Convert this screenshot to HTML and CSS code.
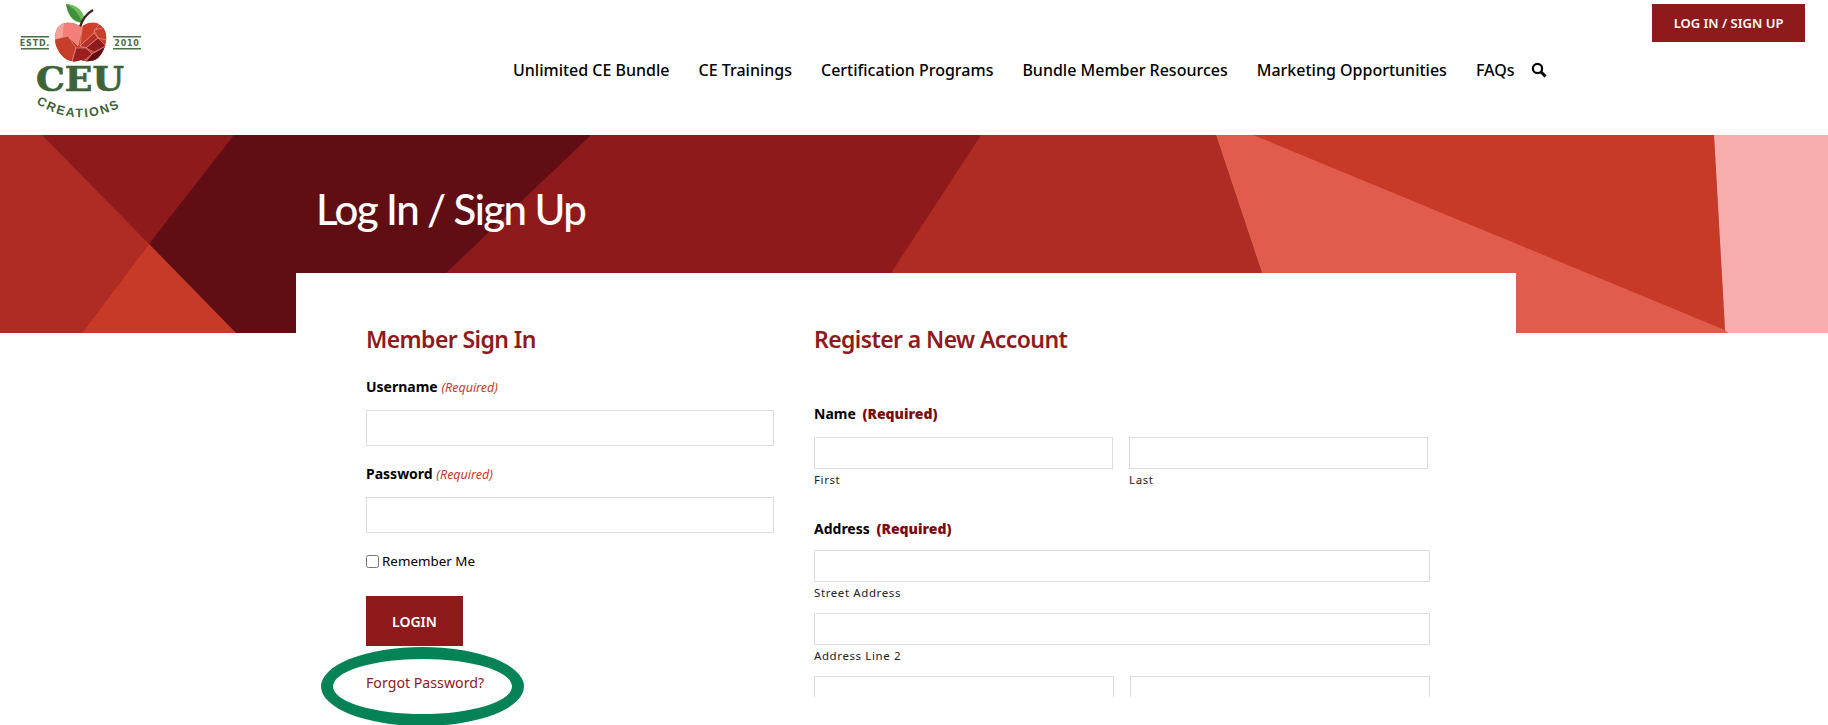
FILE: index.html
```html
<!DOCTYPE html>
<html lang="en">
<head>
  <meta charset="UTF-8">
  <title>Log In / Sign Up - CEU Creations</title>
  <link rel="stylesheet" href="styles.css">
</head>
<body>

  <header class="site-header">
    <a class="logo" href="#">
      <svg width="150" height="130" viewBox="0 0 150 130">
        <defs>
          <clipPath id="apple-shape">
            <path d="M81 27C73 21 61 21 57 29C52 40 57 53 66 59C71 62 76 62 81 60C86 62 93 62 98 58C105 51 109 38 104 29C99 21 89 21 81 27Z"/>
          </clipPath>
          <path id="arc" d="M36 103Q78 131 126 104"/>
        </defs>
        <path d="M82 22C76 24 68 18 66 4C74 4 85 10 84 21Z" fill="#6dbb5c"/>
        <path d="M82 22C79 14 74 8 66 4C68 16 74 22 82 22Z" fill="#3f8f3c"/>
        <path d="M80 27C82 20 86 14 93 10" fill="none" stroke="#43241f" stroke-width="2.5"/>
        <g clip-path="url(#apple-shape)" stroke="#f3b3aa" stroke-width=".5">
          <rect x="50" y="20" width="60" height="45" fill="#c63a27"/>
          <polygon points="50,20 64,20 62,44 50,46" fill="#f6a29c"/>
          <polygon points="64,20 83,24 78,46 68,36 62,38" fill="#f27f78"/>
          <polygon points="83,22 100,22 94,33 80,46" fill="#cc4029"/>
          <polygon points="52,40 68,36 76,48 72,62 60,60" fill="#c63e28"/>
          <polygon points="94,30 110,26 106,40 98,38" fill="#c6402b"/>
          <polygon points="80,46 94,33 98,38 86,48" fill="#b4302a"/>
          <polygon points="86,48 98,38 106,46 94,52" fill="#8e1a1b"/>
          <polygon points="76,48 86,48 92,54 80,64 72,62" fill="#9c1f1f"/>
          <polygon points="92,54 106,46 100,64 84,64" fill="#600e14"/>
        </g>
        <g class="logo-rules">
          <rect x="21" y="36" width="28" height="1.5"/>
          <rect x="21" y="48" width="28" height="1.5"/>
          <rect x="113" y="36" width="28" height="1.5"/>
          <rect x="113" y="48" width="28" height="1.5"/>
        </g>
        <text class="logo-small" x="35" y="46" text-anchor="middle">ESTD.</text>
        <text class="logo-small" x="127" y="46" text-anchor="middle">2010</text>
        <text class="logo-ceu" x="80" y="91" text-anchor="middle" textLength="88" lengthAdjust="spacingAndGlyphs">CEU</text>
        <text class="logo-creations"><textPath href="#arc">CREATIONS</textPath></text>
      </svg>
    </a>

    <nav class="main-nav">
      <a href="#">Unlimited CE Bundle</a>
      <a href="#">CE Trainings</a>
      <a href="#">Certification Programs</a>
      <a href="#">Bundle Member Resources</a>
      <a href="#">Marketing Opportunities</a>
      <a href="#">FAQs</a>
      <svg class="search-icon" viewBox="0 0 16 16" width="16" height="16">
        <circle cx="6.5" cy="6.5" r="4.6" fill="none" stroke="#000" stroke-width="2.2"/>
        <path d="M10 10l4.6 4.4" stroke="#000" stroke-width="3"/>
      </svg>
    </nav>

    <a class="account-btn" href="#">LOG IN / SIGN UP</a>
  </header>

  <section class="hero">
    <svg class="hero-art" viewBox="0 0 1828 198" width="1828" height="198" preserveAspectRatio="none">
      <rect width="1828" height="198" fill="#8e1a1b"/>
      <polygon points="0,0 42,0 149,109 82,198 0,198" fill="#ae2c23"/>
      <polygon points="234,0 591,0 383,198 236,198 149,109" fill="#600e14"/>
      <polygon points="149,109 236,198 82,198" fill="#c63a27"/>
      <polygon points="981,0 1216,0 1282,198 852,198" fill="#ae2c23"/>
      <polygon points="1216,0 1300,0 1740,198 1282,198" fill="#e15c4d"/>
      <polygon points="1253,0 1714,0 1725,195" fill="#c63a27"/>
      <polygon points="1714,0 1828,0 1828,198 1728,198 1725,195" fill="#f7adac"/>
    </svg>
    <h1>Log In / Sign Up</h1>
  </section>

  <main class="card">
    <section class="signin">
      <h2>Member Sign In</h2>
      <div class="field">
        <label>Username <em>(Required)</em></label>
        <input type="text">
      </div>
      <div class="field">
        <label>Password <em>(Required)</em></label>
        <input type="password">
      </div>
      <label class="remember"><input type="checkbox"> Remember Me</label>
      <button class="login-btn">LOGIN</button>
      <div class="forgot">
        <a href="#">Forgot Password?</a>
        <span class="forgot-ring"></span>
      </div>
    </section>

    <section class="register">
      <h2>Register a New Account</h2>
      <div class="reg-frame">
        <div class="reg-group name-group">
          <label>Name <b>(Required)</b></label>
          <div class="two-col">
            <div><input type="text"><small>First</small></div>
            <div><input type="text"><small>Last</small></div>
          </div>
        </div>
        <div class="reg-group">
          <label>Address <b>(Required)</b></label>
          <input type="text"><small>Street Address</small>
          <input class="line-two" type="text"><small>Address Line 2</small>
          <div class="two-col city-row">
            <div><input type="text"></div>
            <div><input type="text"></div>
          </div>
        </div>
      </div>
    </section>
  </main>

</body>
</html>
```

FILE: styles.css
```css
html, body { height: 100%; }
body {
  margin: 0;
  height: 725px;
  overflow: hidden;
  background: #fff;
  color: #000;
  font-family: "Noto Sans", sans-serif;
  font-size: 14px;
}
a { color: inherit; text-decoration: none; }

.site-header {
  display: flex;
  height: 135px;
}
.logo { display: block; width: 150px; height: 130px; }
.logo svg { display: block; }
.logo-rules rect { fill: #4a6d47; }
.logo-small {
  font: bold 8px "DejaVu Sans", sans-serif;
  letter-spacing: .8px;
  fill: #4a6d47;
}
.logo-ceu {
  font: bold 33px "DejaVu Serif", serif;
  fill: #3f6339;
  stroke: #3f6339;
  stroke-width: .7px;
}
.logo-creations {
  font: bold 12.5px "Liberation Sans", sans-serif;
  letter-spacing: 1.9px;
  fill: #3f6339;
}

.main-nav {
  display: flex;
  align-items: center;
  gap: 29px;
  height: 140px;
  margin-left: 363px;
  font-size: 16px;
  font-weight: 500;
  white-space: nowrap;
}
.search-icon { margin-left: -12px; }

.account-btn {
  margin: 4px 23px 0 auto;
  width: 153px;
  height: 38px;
  line-height: 38px;
  text-align: center;
  background: #8e1a1b;
  color: #fff;
  font-size: 13px;
  font-weight: 600;
}

.hero {
  display: grid;
  height: 198px;
}
.hero-art { grid-area: 1 / 1; display: block; }
.hero h1 {
  grid-area: 1 / 1;
  z-index: 1;
  margin: 49px 0 0 316px;
  color: #fff;
  font-family: Lato, sans-serif;
  font-size: 42px;
  font-weight: 500;
  letter-spacing: -1.6px;
  line-height: 50px;
}

.card {
  position: relative;
  z-index: 2;
  display: flex;
  width: 1150px;
  height: 452px;
  margin: -60px 0 0 296px;
  padding-left: 70px;
  background: #fff;
}
.card h2 {
  margin: 0;
  padding-top: 50px;
  color: #8e1a1b;
  font-size: 23px;
  font-weight: 600;
  letter-spacing: -.6px;
  line-height: 32px;
}
.card input[type=text], .card input[type=password] {
  display: block;
  box-sizing: border-box;
  width: 100%;
  padding: 0 8px;
  background: #fff;
  border: 1px solid #ddd;
  border-radius: 0;
}

.signin { width: 408px; margin-right: 40px; flex: none; }
.field { margin-top: 22px; }
.field + .field { margin-top: 18px; }
.field label {
  display: block;
  font-size: 14px;
  font-weight: 700;
  line-height: 20px;
  margin-bottom: 12px;
}
.field em {
  color: #c63a27;
  font-size: 12.5px;
  font-weight: 400;
}
.field input { height: 36px; }

.remember {
  display: flex;
  align-items: center;
  gap: 3px;
  margin-top: 18px;
  height: 20px;
  font-size: 13.4px;
}
.remember input { margin: 0; width: 13px; height: 13px; }

.login-btn {
  display: block;
  margin-top: 25px;
  width: 97px;
  height: 50px;
  padding: 0;
  border: 0;
  background: #8e1a1b;
  color: #fff;
  font: 600 14px "Noto Sans", sans-serif;
}

.forgot {
  position: relative;
  margin-top: 27px;
  font-size: 14.2px;
  line-height: 20px;
  color: #8e1a1b;
}
/* hand-drawn highlight in the screenshot */
.forgot-ring {
  position: absolute;
  left: -45px;
  top: -26px;
  box-sizing: border-box;
  width: 203px;
  height: 79px;
  border: 12px solid #058356;
  border-radius: 50%;
}

.register { width: 616px; flex: none; }
.reg-frame {
  height: 342px;
  overflow: hidden;
  padding-top: 49px;
  box-sizing: border-box;
}
.reg-group > label {
  display: block;
  font-size: 14px;
  font-weight: 700;
  line-height: 20px;
  margin-bottom: 11px;
}
.reg-group > label b { color: #7a0c10; margin-left: 3px; }
.reg-group input { height: 32px; }
.reg-group small {
  display: block;
  margin-top: 3px;
  font-size: 11.5px;
  line-height: 16px;
  letter-spacing: .6px;
  color: #222;
}
.name-group { margin-bottom: 31px; width: 614px; }
.name-group > label { margin-bottom: 13px; }
.two-col {
  display: grid;
  grid-template-columns: 1fr 1fr;
  gap: 16px;
}
.line-two { margin-top: 12px; }
.city-row { margin-top: 12px; }
```
